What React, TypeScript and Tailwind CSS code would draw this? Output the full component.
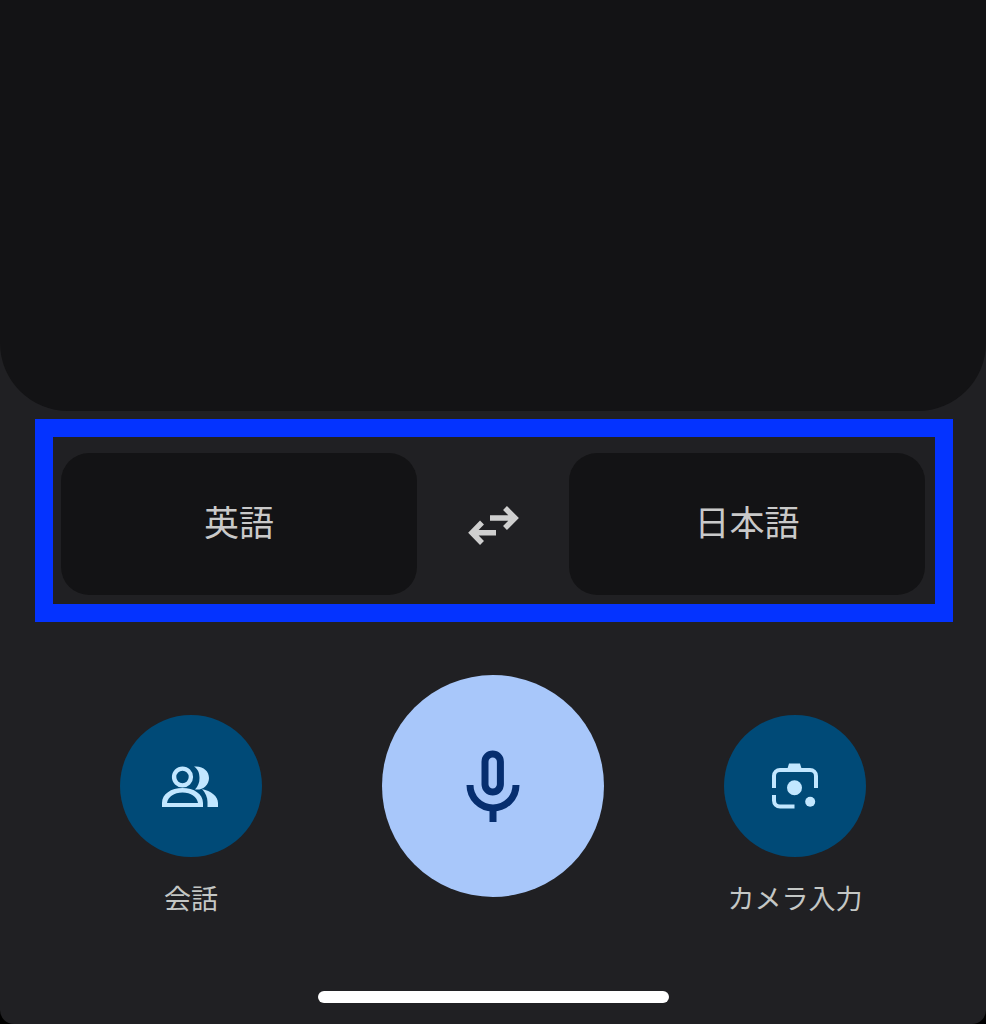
export default function App() {
  const font = { fontFamily: '"Noto Sans CJK JP", "Noto Sans", sans-serif' };
  return (
    <div className="w-[986px] h-[1024px] bg-black overflow-hidden" style={font}>
      <div className="w-full h-full flex flex-col bg-[#202023] rounded-b-[14px] overflow-hidden">
        <div className="h-[411px] shrink-0 bg-[#131315] rounded-b-[68px]" />

        <div className="mt-[8px] ml-[35px] w-[918px] h-[203px] shrink-0 border-[18px] border-[#0433ff] flex items-center justify-between pl-[8px] pr-[10px] pt-[7px]">
          <div className="w-[356px] h-[142px] pb-[8px] rounded-[28px] bg-[#131315] flex items-center justify-center text-[35px] leading-none text-[#c9c9c9]">英語</div>
          <svg width="56" height="46" viewBox="0 0 56 46" fill="none" stroke="#cfcfcf" strokeWidth="5.5" className="mt-[2px]">
            <path d="M25 16H49M40 6L50 16L40 26" />
            <path d="M31 30.7H7M17 20.5L7 30.7L17 41" />
          </svg>
          <div className="w-[356px] h-[142px] pb-[8px] rounded-[28px] bg-[#131315] flex items-center justify-center text-[35px] leading-none text-[#c9c9c9]">日本語</div>
        </div>

        <div className="ml-[40px] mt-[53px] grid grid-cols-[302px_302px_302px] shrink-0">
          <div className="flex flex-col items-center pt-[40px]">
            <div className="w-[142px] h-[142px] rounded-full bg-[#004a77] flex items-center justify-center">
              <svg width="60" height="60" viewBox="0 0 60 60" fill="#c2e7ff">
                <circle cx="21.5" cy="21" r="8.4" fill="none" stroke="#c2e7ff" strokeWidth="4.4" />
                <path fillRule="evenodd" d="M1 51V47C1 38 10 32 21.5 32C33 32 42 38 42 47V51ZM6 47H37C36 41 30 36.5 21.5 36.5C13 36.5 7 41 6 47Z" />
                <path d="M33 10.5C42 9.5 48 15 48 22C48 29 42 34.5 34 33.5C37 30 38.5 27 38.5 22C38.5 17 37 13 33 10.5Z" />
                <path d="M41 33C50 35 57 40 57 47V51H46.5V46C46.5 41 44.5 37 41 33Z" />
              </svg>
            </div>
            <div className="mt-[23px] text-[27px] leading-[36px] text-[#c4c7c5]">会話</div>
          </div>

          <div className="flex justify-center">
            <div className="w-[222px] h-[222px] rounded-full bg-[#a8c7fa] flex items-center justify-center">
              <svg width="60" height="80" viewBox="0 0 60 80" fill="none" stroke="#062e6f" strokeWidth="7">
                <rect x="22" y="8" width="15.4" height="38" rx="7.7" />
                <path d="M7 39A23 23 0 0 0 53 39" />
                <path d="M30 62V76" />
              </svg>
            </div>
          </div>

          <div className="flex flex-col items-center pt-[40px]">
            <div className="w-[142px] h-[142px] rounded-full bg-[#004a77] flex items-center justify-center">
              <svg width="60" height="60" viewBox="0 0 60 60" fill="none">
                <path d="M9 32V20a6 6 0 0 1 6-6h30a6 6 0 0 1 6 6v12" stroke="#c2e7ff" strokeWidth="4" />
                <path d="M9 39v5.5a6 6 0 0 0 6 6H29.5" stroke="#c2e7ff" strokeWidth="4" />
                <path d="M22 14L24 7.5H35L37 14Z" fill="#c2e7ff" />
                <circle cx="29.5" cy="31.7" r="7.5" fill="#c2e7ff" />
                <circle cx="45.2" cy="45.7" r="5" fill="#c2e7ff" />
              </svg>
            </div>
            <div className="mt-[23px] text-[27px] leading-[36px] text-[#c4c7c5]">カメラ入力</div>
          </div>
        </div>

        <div className="mt-auto mb-[21px] ml-[318px] w-[351px] h-[12px] rounded-full bg-white shrink-0" />
      </div>
    </div>
  );
}
